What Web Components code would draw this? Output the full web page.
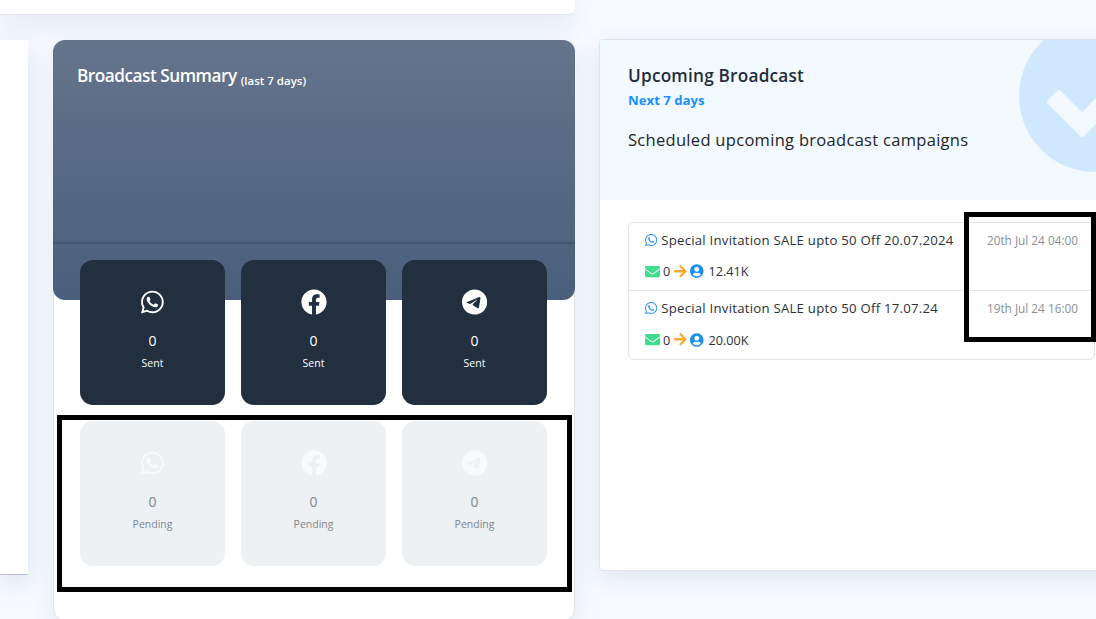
<!DOCTYPE html>
<html>
<head>
<meta charset="utf-8">
<title>Broadcast dashboard</title>
<style>
  html, body { margin: 0; height: 619px; overflow: hidden; }
  body {
    position: relative;
    background: #f7faff;
    font-family: "Open Sans", "Liberation Sans", sans-serif;
  }
  .main {
    display: grid;
    grid-template-columns: 29px 522px 524px;
    column-gap: 24px;
    align-items: start;
    margin-top: 25px;
  }
</style>
</head>
<body>
  <blank-card style="width:575px;height:15px;border-radius:0 0 6px 0"></blank-card>
  <div class="main">
    <blank-card style="width:28px;height:535px" line></blank-card>
    <broadcast-summary>
      <stat-tile icon="whatsapp" count="0" label="Sent"></stat-tile>
      <stat-tile icon="facebook" count="0" label="Sent"></stat-tile>
      <stat-tile icon="telegram" count="0" label="Sent"></stat-tile>
      <stat-tile icon="whatsapp" count="0" label="Pending" muted></stat-tile>
      <stat-tile icon="facebook" count="0" label="Pending" muted></stat-tile>
      <stat-tile icon="telegram" count="0" label="Pending" muted></stat-tile>
    </broadcast-summary>
    <upcoming-broadcast>
      <broadcast-row title="Special Invitation SALE upto 50 Off 20.07.2024" when="20th Jul 24 04:00" reach="12.41K"></broadcast-row>
      <broadcast-row title="Special Invitation SALE upto 50 Off 17.07.24" when="19th Jul 24 16:00" reach="20.00K"></broadcast-row>
    </upcoming-broadcast>
  </div>
  <mark-box style="left:57px;top:415px;width:515px;height:177px"></mark-box>
  <mark-box style="left:964px;top:212px;width:132px;height:130px"></mark-box>

<script>
// Icon paths
const ICONS = {
  whatsapp: [448, 'M380.9 97.1C339 55.1 283.2 32 223.9 32c-122.4 0-222 99.6-222 222 0 39.1 10.2 77.3 29.6 111L0 480l117.7-30.9c32.4 17.7 68.9 27 106.1 27h.1c122.3 0 224.1-99.6 224.1-222 0-59.3-25.2-115-67.1-157zm-157 341.6c-33.2 0-65.7-8.9-94-25.7l-6.7-4-69.8 18.3L72 359.2l-4.4-7c-18.5-29.4-28.2-63.3-28.2-98.2 0-101.7 82.8-184.5 184.6-184.5 49.3 0 95.6 19.2 130.4 54.1 34.8 34.9 56.2 81.2 56.1 130.5 0 101.8-84.9 184.6-186.6 184.6zm101.2-138.2c-5.5-2.8-32.8-16.2-37.9-18-5.1-1.9-8.8-2.8-12.5 2.8-3.7 5.6-14.3 18-17.6 21.8-3.2 3.7-6.5 4.2-12 1.4-32.6-16.3-54-29.1-75.5-66-5.7-9.8 5.7-9.1 16.3-30.3 1.8-3.7.9-6.9-.5-9.7-1.4-2.8-12.5-30.1-17.1-41.2-4.5-10.8-9.1-9.3-12.5-9.5-3.2-.2-6.9-.2-10.6-.2-3.7 0-9.7 1.4-14.8 6.9-5.1 5.6-19.4 19-19.4 46.3 0 27.3 19.9 53.7 22.6 57.4 2.8 3.7 39.1 59.7 94.8 83.8 35.2 15.2 49 16.5 66.6 13.9 10.7-1.6 32.8-13.4 37.4-26.4 4.6-13 4.6-24.1 3.2-26.4-1.3-2.5-5-3.9-10.5-6.6z'],
  facebook: [512, 'M504 256C504 119 393 8 256 8S8 119 8 256c0 123.78 90.69 226.38 209.25 245V327.69h-63V256h63v-54.64c0-62.15 37-96.48 93.67-96.48 27.14 0 55.52 4.84 55.52 4.84v61h-31.28c-30.8 0-40.41 19.12-40.41 38.73V256h68.78l-11 71.69h-57.78V501C413.31 482.38 504 379.78 504 256z'],
  telegram: [496, 'M248,8C111.033,8,0,119.033,0,256S111.033,504,248,504,496,392.967,496,256,384.967,8,248,8ZM362.952,176.66c-3.732,39.215-19.881,134.378-28.1,178.3-3.476,18.584-10.322,24.816-16.948,25.425-14.4,1.326-25.338-9.517-39.287-18.661-21.827-14.308-34.158-23.215-55.346-37.177-24.485-16.135-8.612-25,5.342-39.5,3.652-3.793,67.107-61.51,68.335-66.746.153-.655.3-3.1-1.154-4.384s-3.59-.849-5.135-.5q-3.283.746-104.608,69.142-14.845,10.194-26.894,9.934c-8.855-.191-25.888-5.006-38.551-9.123-15.531-5.048-27.875-7.717-26.8-16.291q.84-6.7,18.45-13.7,108.446-47.248,144.628-62.3c68.872-28.647,83.183-33.623,92.511-33.789,2.052-.034,6.639.474,9.61,2.885a10.452,10.452,0,0,1,3.53,6.716A43.765,43.765,0,0,1,362.952,176.66Z'],
  envelope: [512, 'M502.3 190.8c3.9-3.1 9.7-.2 9.7 4.7V400c0 26.5-21.5 48-48 48H48c-26.5 0-48-21.5-48-48V195.6c0-5 5.7-7.8 9.7-4.7 22.4 17.4 52.1 39.5 154.1 113.6 21.1 15.4 56.7 47.8 92.2 47.6 35.7.3 72-32.8 92.3-47.6 102-74.1 131.6-96.3 154-113.7zM256 320c23.2.4 56.6-29.2 73.4-41.4 132.7-96.3 142.8-104.7 173.4-128.7 5.8-4.5 9.2-11.5 9.2-18.9v-19c0-26.5-21.5-48-48-48H48C21.5 64 0 85.5 0 112v19c0 7.4 3.4 14.3 9.2 18.9 30.6 23.9 40.7 32.4 173.4 128.7 16.8 12.2 50.2 41.8 73.4 41.4z'],
  arrow: [448, 'M190.5 66.9l22.2-22.2c9.4-9.4 24.6-9.4 33.9 0L441 239c9.4 9.4 9.4 24.6 0 33.9L246.6 467.3c-9.4 9.4-24.6 9.4-33.9 0l-22.2-22.2c-9.5-9.5-9.3-25 .4-34.3L311.4 296H24c-13.3 0-24-10.7-24-24v-32c0-13.3 10.7-24 24-24h287.4L190.9 101.2c-9.8-9.3-10-24.8-.4-34.3z'],
  user: [496, 'M248 8C111 8 0 119 0 256s111 248 248 248 248-111 248-248S385 8 248 8zm0 96c48.6 0 88 39.4 88 88s-39.4 88-88 88-88-39.4-88-88 39.4-88 88-88zm0 344c-58.7 0-111.3-26.6-146.5-68.2 18.8-35.4 55.6-59.8 98.5-59.8 2.4 0 4.8.4 7.1 1.1 13 4.2 26.6 6.9 40.9 6.9 14.3 0 28-2.7 40.9-6.9 2.3-.7 4.7-1.1 7.1-1.1 42.9 0 79.7 24.4 98.5 59.8C359.3 421.4 306.7 448 248 448z']
};

// size is the em height, width follows the glyph like an icon font does
function iconSvg(name, size, color) {
  const [w, d] = ICONS[name];
  return `<svg width="${size * w / 512}" height="${size}" viewBox="0 0 ${w} 512" fill="${color}" style="display:block;flex:none"><path d="${d}"/></svg>`;
}

// Plain white card, used for the ones cut off by the window
class BlankCard extends HTMLElement {
  constructor() {
    super();
    const root = this.attachShadow({ mode: 'open' });
    root.innerHTML = `
      <style>
        :host {
          display: block;
          box-sizing: border-box;
          background: #fff;
          box-shadow: 0 8px 24px rgba(60,80,130,.14);
          border-bottom: 1px solid #e2e6ec;
        }
        :host([line]) {
          border-bottom: 1px solid;
          border-image: linear-gradient(90deg, #dcb4c4, #a9c4f0) 1;
        }
      </style>`;
  }
}
customElements.define('blank-card', BlankCard);

// Single channel tile
class StatTile extends HTMLElement {
  constructor() {
    super();
    const root = this.attachShadow({ mode: 'open' });
    const muted = this.hasAttribute('muted');
    root.innerHTML = `
      <style>
        :host {
          display: flex;
          flex-direction: column;
          align-items: center;
          box-sizing: border-box;
          height: 145px;
          padding-top: 29px;
          border-radius: 13px;
          background: #212f3f;
          color: #fff;
        }
        :host([muted]) {
          background: #eef1f4;
          color: #80868c;
        }
        .count { margin-top: 16px; font-size: 14px; line-height: 20px; }
        .label { margin-top: 4px; font-size: 10.5px; line-height: 16px; }
      </style>
      ${iconSvg(this.getAttribute('icon'), 26, muted ? '#f9fafb' : '#fff')}
      <div class="count">${this.getAttribute('count')}</div>
      <div class="label">${this.getAttribute('label')}</div>`;
  }
}
customElements.define('stat-tile', StatTile);

// Middle card
class BroadcastSummary extends HTMLElement {
  constructor() {
    super();
    const root = this.attachShadow({ mode: 'open' });
    root.innerHTML = `
      <style>
        :host {
          display: block;
          box-sizing: border-box;
          width: 522px;
          height: 581px;
          background: #fff;
          border: 1px solid #dfe3ea;
          border-radius: 12px;
          box-shadow: 0 8px 24px rgba(60,80,130,.1);
        }
        .head {
          display: flex;
          flex-direction: column;
          box-sizing: border-box;
          height: 260px;
          margin: -1px -1px 0;
          padding-bottom: 56px;
          border-radius: 12px;
          background: linear-gradient(180deg, #64748b 0%, #4a5f7c 100%);
          color: #fff;
        }
        h2 {
          margin: 0;
          padding: 25px 24px 0;
          font-size: 17.2px;
          font-weight: 600;
          line-height: 22px;
          letter-spacing: -.48px;
        }
        small { font-size: 11.5px; letter-spacing: 0; vertical-align: -3px; line-height: 1; }
        .chart { flex: 1; border-bottom: 2px solid #435670; }
        .tiles {
          display: grid;
          grid-template-columns: repeat(3, 145px);
          gap: 16px;
          margin-top: -40px;
          padding: 0 26px;
        }
      </style>
      <div class="head">
        <h2>Broadcast Summary <small>(last 7 days)</small></h2>
        <div class="chart"></div>
      </div>
      <div class="tiles"><slot></slot></div>`;
  }
}
customElements.define('broadcast-summary', BroadcastSummary);

// One line of the upcoming list
class BroadcastRow extends HTMLElement {
  constructor() {
    super();
    const root = this.attachShadow({ mode: 'open' });
    root.innerHTML = `
      <style>
        :host {
          display: block;
          box-sizing: border-box;
          height: 68.2px;
          padding: 7px 16px 0 16px;
          border-bottom: 1px solid #e2e5e9;
          color: #2b3138;
          font-size: 12.7px;
          line-height: 20px;
        }
        :host(:last-child) { border-bottom: 0; }
        .top { display: flex; justify-content: space-between; }
        .name { display: flex; align-items: center; gap: 4px; font-size: 13.2px; letter-spacing: .24px; }
        .when { color: #8a8f96; font-size: 11.8px; }
        .stats { display: flex; align-items: center; margin-top: 11.4px; }
      </style>
      <div class="top">
        <div class="name">${iconSvg('whatsapp', 14, '#2f96f3')}<span>${this.getAttribute('title')}</span></div>
        <div class="when">${this.getAttribute('when')}</div>
      </div>
      <div class="stats">
        ${iconSvg('envelope', 15, '#3ddc8f')}
        <span style="margin-left:3px">0</span>
        <span style="margin-left:4px">${iconSvg('arrow', 14.5, '#ffa733')}</span>
        <span style="margin-left:3px">${iconSvg('user', 14, '#1b8ff0')}</span>
        <span style="margin-left:5px">${this.getAttribute('reach')}</span>
      </div>`;
  }
}
customElements.define('broadcast-row', BroadcastRow);

// Right card
class UpcomingBroadcast extends HTMLElement {
  constructor() {
    super();
    const root = this.attachShadow({ mode: 'open' });
    root.innerHTML = `
      <style>
        :host {
          display: block;
          box-sizing: border-box;
          width: 524px;
          height: 532px;
          margin-top: -1px;
          background: #fff;
          border: 1px solid #e1e5ea;
          border-radius: 4px;
          box-shadow: 0 8px 24px rgba(60,80,130,.12);
        }
        .head {
          position: relative;
          box-sizing: border-box;
          height: 160px;
          padding: 24px 28px 0;
          overflow: hidden;
          background: #f3faff;
        }
        h3 {
          margin: 0;
          color: #1f2d3d;
          font-size: 17.2px;
          font-weight: 600;
          line-height: 24px;
          letter-spacing: .22px;
        }
        .sub {
          color: #1a90ff;
          font-size: 13.2px;
          font-weight: 700;
          line-height: 18px;
          margin-top: 3px;
        }
        p {
          margin: 19px 0 0;
          color: #212529;
          font-size: 16.5px;
          line-height: 24px;
          letter-spacing: .3px;
        }
        svg.deco { position: absolute; left: 419px; top: 0; }
        .list {
          margin: 22px 0 0 28px;
          width: 467px;
          box-sizing: border-box;
          border: 1px solid #e0e3e7;
          border-radius: 6px;
        }
      </style>
      <div class="head">
        <h3>Upcoming Broadcast</h3>
        <div class="sub">Next 7 days</div>
        <p>Scheduled upcoming broadcast campaigns</p>
        <svg class="deco" width="110" height="140" viewBox="0 0 110 140">
          <circle cx="76" cy="56" r="76" fill="#cfe8fd"/>
          <polygon points="30,62 40,52 63,75 110,28 110,48 63,95" fill="#f3faff" stroke="#f3faff" stroke-width="4" stroke-linejoin="round"/>
        </svg>
      </div>
      <div class="list"><slot></slot></div>`;
  }
}
customElements.define('upcoming-broadcast', UpcomingBroadcast);

// Black annotation rectangle drawn over the page
class MarkBox extends HTMLElement {
  constructor() {
    super();
    const root = this.attachShadow({ mode: 'open' });
    root.innerHTML = `
      <style>
        :host {
          position: absolute;
          box-sizing: border-box;
          border: 5px solid #000;
          pointer-events: none;
        }
      </style>`;
  }
}
customElements.define('mark-box', MarkBox);
</script>
</body>
</html>
